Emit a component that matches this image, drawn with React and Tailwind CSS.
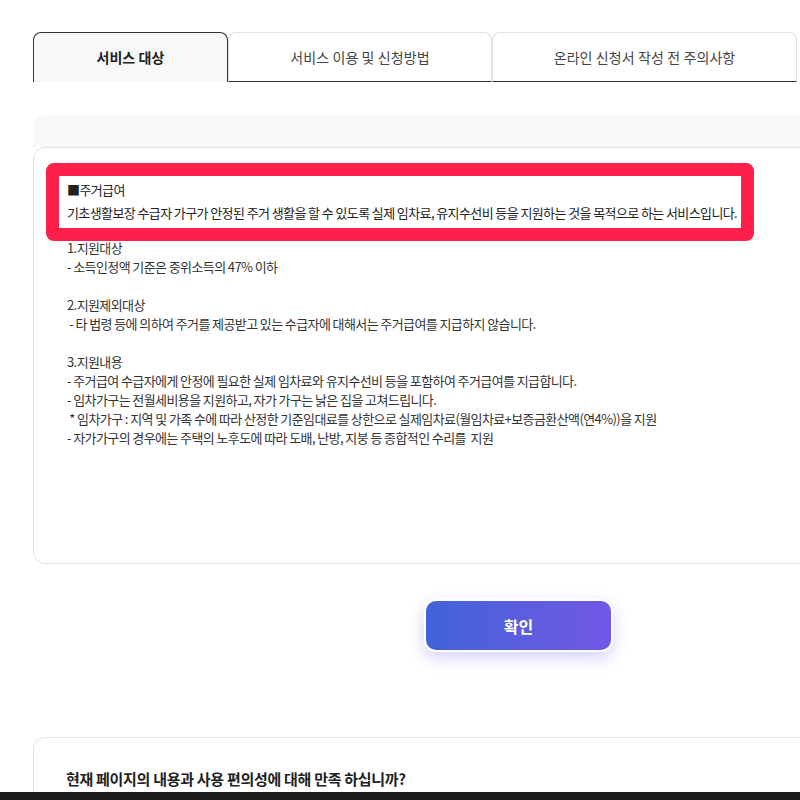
const FONT = "font-['Noto_Sans_CJK_KR','Noto_Sans',sans-serif]";

const tabs = [
  { label: '서비스 대상', width: 'w-[195px]', active: true },
  { label: '서비스 이용 및 신청방법', width: 'w-[264px]' },
  { label: '온라인 신청서 작성 전 주의사항', width: 'w-[305px]' },
];

const bodyLines = [
  '1.지원대상',
  '- 소득인정액 기준은 중위소득의 47% 이하',
  '',
  '2.지원제외대상',
  ' - 타 법령 등에 의하여 주거를 제공받고 있는 수급자에 대해서는 주거급여를 지급하지 않습니다.',
  '',
  '3.지원내용',
  '- 주거급여 수급자에게 안정에 필요한 실제 임차료와 유지수선비 등을 포함하여 주거급여를 지급합니다.',
  '- 임차가구는 전월세비용을 지원하고, 자가 가구는 낡은 집을 고쳐드립니다.',
  ' * 임차가구 : 지역 및 가족 수에 따라 산정한 기준임대료를 상한으로 실제임차료(월임차료+보증금환산액(연4%))을 지원',
  '- 자가가구의 경우에는 주택의 노후도에 따라 도배, 난방, 지붕 등 종합적인 수리를  지원',
];

export default function App() {
  return (
    <div className={`${FONT} relative h-[800px] w-[800px] overflow-hidden bg-white text-[#333]`}>
      <div className="ml-[33px] w-[971px] pt-[32px]">
        {/* tabs */}
        <div className="flex h-[50px]">
          {tabs.map((t) =>
            t.active ? (
              <div
                key={t.label}
                className={`${t.width} flex items-center justify-center rounded-t-[8px] border border-b-0 border-[#333] bg-[#f8f8f8] text-[14px] font-bold tracking-[0.1px] text-[#222]`}
              >
                {t.label}
              </div>
            ) : (
              <div
                key={t.label}
                className={`${t.width} flex items-center justify-center rounded-t-[8px] border border-b-[#333] border-[#e2e2e2] bg-white text-[14px] tracking-[0.1px] text-[#444]`}
              >
                {t.label}
              </div>
            )
          )}
        </div>

        {/* content */}
        <div className="mt-[33px] h-[32px] rounded-tl-[12px] bg-[#f8f8f8]" />
        <div className="h-[417px] rounded-[12px] border border-[#e3e3e3] bg-white pl-[12px] pt-[15px]">
          <div className="w-[708px] rounded-[8px] border-[13px] border-[#ff1f4b] bg-white pb-[4px] pl-[8px] pt-[2px] text-[13px] leading-[23px] tracking-[-0.6px] text-[#222]">
            <p>■주거급여</p>
            <p>기초생활보장 수급자 가구가 안정된 주거 생활을 할 수 있도록 실제 임차료, 유지수선비 등을 지원하는 것을 목적으로 하는 서비스입니다.</p>
          </div>
          <div className="-mt-[3px] pl-[21px] text-[13px] leading-[19px] tracking-[-0.6px] text-[#333]">
            {bodyLines.map((line, i) => (
              <p key={i} className="h-[19px] whitespace-pre">
                {line}
              </p>
            ))}
          </div>
        </div>

        <div className="mt-[35px] flex justify-center">
          <button className="flex h-[53px] w-[189px] items-center justify-center rounded-[12px] border-2 border-white bg-gradient-to-r from-[#4062d8] to-[#7058e6] text-[16px] font-bold text-white shadow-[0_6px_16px_rgba(100,90,230,0.28)]">
            확인
          </button>
        </div>

        <div className="mt-[85px] h-[100px] rounded-[12px] border border-[#e3e3e3] bg-white pl-[32px] pt-[30px]">
          <p className="text-[15px] font-bold tracking-[-0.3px] text-[#222]">
            현재 페이지의 내용과 사용 편의성에 대해 만족 하십니까?
          </p>
        </div>
      </div>
      <div className="absolute bottom-0 left-0 h-[8px] w-full bg-[#1c1c1c]" />
    </div>
  );
}
